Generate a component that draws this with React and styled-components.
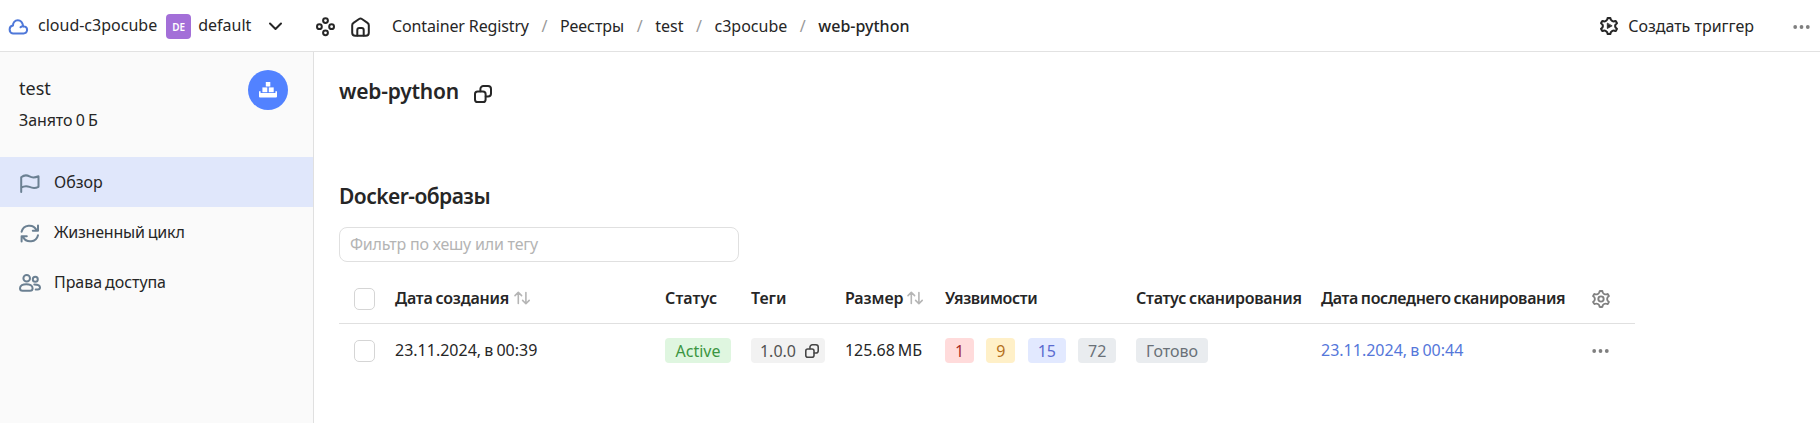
import React from "react";
import styled, { createGlobalStyle } from "styled-components";

const Global = createGlobalStyle`
  * { box-sizing: border-box; }
  body {
    margin: 0;
    background: #fff;
    color: #262626;
    font: 16px/20px "Noto Sans", sans-serif;
    white-space: nowrap;
    overflow: hidden;
  }
`;

const Page = styled.div`
  height: 423px;
  display: flex;
  flex-direction: column;
`;

const Text = styled.span`
  letter-spacing: ${(p) => p.$ls || 0}px;
  word-spacing: ${(p) => p.$ws || 0}px;
`;

const Glyph = styled.svg`
  display: block;
  flex: none;
  overflow: visible;
  fill: none;
  stroke: currentColor;
  stroke-width: 2;
  stroke-linecap: round;
  stroke-linejoin: round;
  color: ${(p) => p.$color || "inherit"};
`;

function Icon({ w, h, color, box, children, ...rest }) {
  return (
    <Glyph width={w} height={h} viewBox={box || `0 0 ${w} ${h}`} $color={color} {...rest}>
      {children}
    </Glyph>
  );
}

const CloudIcon = () => (
  <Icon w={20} h={16} color="#4f78d9">
    <path d="M5 14.4h10.600a3.500 3.500 0 0 0 1.400-6.700 3.400 3.400 0 0 0-1.700-.3C14.600 3.800 12.700 1.300 9.800 1.300c-3 0-4.900 2.300-4.800 5.200A4 4 0 0 0 5 14.400z" />
    <path d="M15.300 7.200a3.500 3.500 0 0 0-2.800 1" />
  </Icon>
);
const ChevronIcon = () => (
  <Icon w={13} h={9}><path d="M1 1.500l5.500 5.500L12 1.500" /></Icon>
);
const ServicesIcon = () => (
  <Icon w={19} h={19}>
    <circle cx="9.500" cy="3.600" r="2.400" />
    <circle cx="3.400" cy="9.700" r="2.400" />
    <circle cx="15.600" cy="9.700" r="2.400" />
    <circle cx="9.500" cy="15.800" r="2.400" />
  </Icon>
);
const HomeIcon = () => (
  <Icon w={19} h={20}>
    <path d="M1.200 8.300c0-1 .5-1.900 1.300-2.400L8.100 2a2.500 2.500 0 0 1 2.800 0l5.600 3.900c.8.500 1.300 1.400 1.300 2.400V15.700a3 3 0 0 1-3 3H4.200a3 3 0 0 1-3-3z" />
    <path d="M6.300 18.500V13a2 2 0 0 1 2-2h2.400a2 2 0 0 1 2 2v5.500" />
  </Icon>
);
const gearPath =
  "M7.199 2H8.8a.2.2 0 0 1 .2.2c0 1.808 1.958 2.939 3.524 2.034a.199.199 0 0 1 .271.073l.802 1.388a.199.199 0 0 1-.073.272c-1.566.904-1.566 3.164 0 4.069a.199.199 0 0 1 .073.271l-.802 1.388a.199.199 0 0 1-.271.073C10.958 10.863 9 11.993 9 13.8a.199.199 0 0 1-.199.2H7.2a.199.199 0 0 1-.2-.2c0-1.808-1.958-2.938-3.524-2.034a.199.199 0 0 1-.272-.073l-.8-1.388a.199.199 0 0 1 .072-.271c1.566-.905 1.566-3.165 0-4.07a.199.199 0 0 1-.073-.27l.801-1.389a.199.199 0 0 1 .272-.072C5.042 5.138 7 4.007 7 2.199c0-.11.089-.199.199-.199Z";
const gearBox = "1.6 1.25 12.8 13.5";
const TriggerIcon = () => (
  <Icon w={18} h={18} box={gearBox} preserveAspectRatio="none">
    <path d={gearPath} strokeWidth="1.500" />
    <path d="M6.800 6.100v3.800L10 8z" fill="currentColor" strokeWidth=".6" />
  </Icon>
);
const SettingsIcon = () => (
  <Icon w={18} h={18} box={gearBox} preserveAspectRatio="none" color="#808080">
    <path d={gearPath} strokeWidth="1.350" />
    <circle cx="8" cy="8" r="1.900" strokeWidth="1.350" />
  </Icon>
);
const DotsIcon = () => (
  <Icon w={17} h={4} color="#7f7f7f">
    <g fill="currentColor" stroke="none">
      <circle cx="2.200" cy="2" r="1.900" />
      <circle cx="8.500" cy="2" r="1.900" />
      <circle cx="14.800" cy="2" r="1.900" />
    </g>
  </Icon>
);
const CopyIcon = ({ size = 18, color }) => (
  <Icon w={size} h={size} box="0 0 18 18" color={color}>
    <rect x="1" y="6.400" width="10.600" height="10.600" rx="2.600" />
    <path d="M6.400 6.200V4a3 3 0 0 1 3-3H14a3 3 0 0 1 3 3v4.600a3 3 0 0 1-3 3h-2.200" />
  </Icon>
);
const RegistryIcon = () => (
  <Icon w={18} h={16}>
    <g fill="#fff" stroke="none">
      <rect x="6.800" y="0" width="4.500" height="4.500" />
      <rect x="3.400" y="5.400" width="4.900" height="4.800" />
      <rect x="9.800" y="5.400" width="4.900" height="4.800" />
      <path d="M0 9.200h1.600v1.800h14.800v-1.800h1.600v5.400q0 1-1 1H1q-1 0-1-1z" />
    </g>
  </Icon>
);
const FlagIcon = () => (
  <Icon w={20} h={19}>
    <path d="M1.200 18V3.200C4 1 7 1 9.500 2.400S15 3.700 18.500 2.300V12.800C15 14.600 12.500 14.200 9.500 12.900S4 11.900 1.200 13.700" />
  </Icon>
);
const CycleIcon = () => (
  <Icon w={20} h={19}>
    <path d="M1.600 7.800A8 8 0 0 1 16.500 6M18 1.500v5.200h-5.200" />
    <path d="M18 11.200A8 8 0 0 1 3.100 13M1.600 17.500v-5.200h5.200" />
  </Icon>
);
const PeopleIcon = () => (
  <Icon w={22} h={18}>
    <circle cx="7.700" cy="4.300" r="3.300" />
    <path d="M1 14.200C1 11.600 4 10.200 7.300 10.200s6.300 1.400 6.300 4c0 1.600-1 2.600-2.600 2.600H3.600C2 16.800 1 15.800 1 14.200z" />
    <circle cx="16.300" cy="5.200" r="2.500" />
    <path d="M15.300 10.500c3 0 5.700 1 5.700 3 0 1.200-.9 1.900-2.300 1.900h-2" />
  </Icon>
);
const SortIcon = () => (
  <Icon w={16} h={14} color="#b5b5b5">
    <path strokeWidth="1.600" d="M4.300 12.500V1.500M1 4.600l3.300-3.300 3.300 3.300M11.900 1.500v11M8.600 9.400l3.300 3.300 3.300-3.300" />
  </Icon>
);

const Header = styled.header`
  height: 52px;
  flex: none;
  display: flex;
  align-items: center;
  border-bottom: 1px solid #e2e2e2;
  padding: 2px 10px 0 8px;
`;
const Picker = styled.div`
  width: 308px;
  display: flex;
  align-items: center;
`;
const CloudName = styled(Text)`
  margin: -3px 9px 0 10px;
`;
const FolderName = styled(Text)`
  margin: -3px 18px 0 7px;
`;
const FolderBadge = styled.span`
  width: 25px;
  height: 25px;
  border-radius: 4px;
  background: #a36fd8;
  color: #fff;
  font-size: 10px;
  font-weight: 600;
  line-height: 26px;
  text-align: center;
`;
const NavIcons = styled.div`
  display: flex;
  align-items: center;
  gap: 16px;
`;
const Crumbs = styled.nav`
  margin: -1px auto 0 22px;
  display: flex;
`;
const Crumb = styled(Text)`
  font-weight: ${(p) => (p.$current ? 500 : 400)};
`;
const Slash = styled.span`
  width: 31px;
  text-align: center;
  color: #999;
`;
const TriggerButton = styled.div`
  display: flex;
  align-items: center;
  gap: 10px;
  margin: -1px 39px 0 0;
`;

const Body = styled.div`
  flex: 1;
  display: flex;
`;
const Sidebar = styled.aside`
  width: 314px;
  flex: none;
  background: #fafafa;
  border-right: 1px solid #e0e0e0;
`;
const RegistryHead = styled.div`
  height: 105px;
  display: flex;
  justify-content: space-between;
  padding: 18px 25px 0 19px;
`;
const RegistryInfo = styled.div`
  padding-top: 8px;
`;
const RegistryName = styled.div`
  font-size: 18px;
`;
const RegistryUsage = styled(Text)`
  display: block;
  margin-top: 12px;
`;
const RegistryBadge = styled.div`
  width: 40px;
  height: 40px;
  border-radius: 50%;
  background: #5282ff;
  display: flex;
  align-items: center;
  justify-content: center;
`;
const MenuItem = styled.div`
  height: 50px;
  display: flex;
  align-items: center;
  background: ${(p) => (p.$active ? "#e0e7fb" : "transparent")};
`;
const MenuIcon = styled.span`
  width: 54px;
  padding: 2px 0 0 ${(p) => p.$pad || 20}px;
  color: #6b8092;
`;

const Main = styled.main`
  width: 1321px;
  padding: 27px 0 0 25px;
`;
const TitleRow = styled.div`
  display: flex;
  align-items: center;
  gap: 15px;
  height: 24px;
`;
const Title = styled.h1`
  margin: 0;
  font-size: 21px;
  line-height: 24px;
  font-weight: 600;
  letter-spacing: -0.22px;
`;
const CopyTitle = styled.span`
  padding-top: 5px;
`;
const Subtitle = styled.h2`
  margin: 81px 0 19px;
  font-size: 21px;
  line-height: 24px;
  font-weight: 600;
  letter-spacing: -0.55px;
`;
const Filter = styled.input`
  display: block;
  width: 400px;
  height: 35px;
  border: 1px solid #e0e0e0;
  border-radius: 8px;
  padding: 0 10px 1px;
  font: inherit;
  letter-spacing: -0.21px;
  &::placeholder { color: #b4b4b4; opacity: 1; }
`;
const TableRow = styled.div`
  display: grid;
  grid-template-columns: 56px 270px 86px 94px 100px 191px 185px 271px 42px;
  height: ${(p) => (p.$head ? 50 : 53)}px;
  margin-top: ${(p) => (p.$head ? 12 : 0)}px;
  align-items: center;
  font-weight: ${(p) => (p.$head ? 600 : 400)};
  border-bottom: ${(p) => (p.$head ? "1px solid #e0e0e0" : "0")};
`;
const Cell = styled.div`
  display: flex;
  align-items: center;
  gap: ${(p) => p.$gap || 0}px;
  padding-left: ${(p) => p.$pad || 0}px;
  margin-top: ${(p) => p.$shift || 0}px;
`;
const Checkbox = styled.span`
  width: 21px;
  height: 22px;
  border: 1px solid #d5d5d5;
  border-radius: 5px;
  background: #fff;
`;
const tones = {
  green: ["#dff6e0", "#3b9542"],
  plain: ["#f2f2f2", "#525252"],
  red: ["#ffdbdb", "#a62c2c"],
  yellow: ["#fff0c8", "#b5701c"],
  blue: ["#e2e9ff", "#5b6bcf"],
  gray: ["#e9ecef", "#6a7178"],
};
const Label = styled.span`
  display: inline-flex;
  align-items: center;
  justify-content: center;
  width: ${(p) => p.$w}px;
  height: 25px;
  gap: 9px;
  padding-left: ${(p) => p.$pad || 0}px;
  border-radius: 4px;
  background: ${(p) => tones[p.$tone][0]};
  color: ${(p) => tones[p.$tone][1]};
`;
const Link = styled(Text)`
  color: #5577da;
`;
const Severities = styled(Cell)`
  gap: 12.4px;
`;

export default function App() {
  return (
    <Page>
      <Global />
      <Header>
        <Picker>
          <CloudIcon />
          <CloudName>cloud-c3pocube</CloudName>
          <FolderBadge>DE</FolderBadge>
          <FolderName>default</FolderName>
          <ChevronIcon />
        </Picker>
        <NavIcons>
          <ServicesIcon />
          <HomeIcon />
        </NavIcons>
        <Crumbs>
          <Crumb $ls={-0.14}>Container Registry</Crumb>
          <Slash>/</Slash>
          <Crumb>Реестры</Crumb>
          <Slash>/</Slash>
          <Crumb>test</Crumb>
          <Slash>/</Slash>
          <Crumb>c3pocube</Crumb>
          <Slash>/</Slash>
          <Crumb $current>web-python</Crumb>
        </Crumbs>
        <TriggerButton>
          <TriggerIcon />
          <Text>Создать триггер</Text>
        </TriggerButton>
        <DotsIcon />
      </Header>
      <Body>
        <Sidebar>
          <RegistryHead>
            <RegistryInfo>
              <RegistryName>test</RegistryName>
              <RegistryUsage $ls={-0.1} $ws={-0.8}>Занято 0 Б</RegistryUsage>
            </RegistryInfo>
            <RegistryBadge><RegistryIcon /></RegistryBadge>
          </RegistryHead>
          <MenuItem $active>
            <MenuIcon><FlagIcon /></MenuIcon>
            <Text>Обзор</Text>
          </MenuItem>
          <MenuItem>
            <MenuIcon><CycleIcon /></MenuIcon>
            <Text $ls={-0.2} $ws={-1}>Жизненный цикл</Text>
          </MenuItem>
          <MenuItem>
            <MenuIcon $pad={19}><PeopleIcon /></MenuIcon>
            <Text $ls={-0.06} $ws={-1}>Права доступа</Text>
          </MenuItem>
        </Sidebar>
        <Main>
          <TitleRow>
            <Title>web-python</Title>
            <CopyTitle><CopyIcon /></CopyTitle>
          </TitleRow>
          <Subtitle>Docker-образы</Subtitle>
          <Filter placeholder="Фильтр по хешу или тегу" />
          <TableRow $head>
            <Cell $pad={15}><Checkbox /></Cell>
            <Cell $gap={5} $shift={-1}><Text $ls={-0.22} $ws={-1}>Дата создания</Text><SortIcon /></Cell>
            <Cell $shift={-1}><Text $ls={0.1}>Статус</Text></Cell>
            <Cell $shift={-1}><Text>Теги</Text></Cell>
            <Cell $gap={4} $shift={-1}><Text $ls={-0.1}>Размер</Text><SortIcon /></Cell>
            <Cell $shift={-1}><Text $ls={-0.36}>Уязвимости</Text></Cell>
            <Cell $shift={-1}><Text $ls={-0.25} $ws={-1}>Статус сканирования</Text></Cell>
            <Cell $shift={-1}><Text $ls={-0.34} $ws={-1}>Дата последнего сканирования</Text></Cell>
            <Cell><SettingsIcon /></Cell>
          </TableRow>
          <TableRow>
            <Cell $pad={15}><Checkbox /></Cell>
            <Cell $shift={-2}><Text $ws={-1}>23.11.2024, в 00:39</Text></Cell>
            <Cell><Label $tone="green" $w={66}>Active</Label></Cell>
            <Cell>
              <Label $tone="plain" $w={74} $pad={3}>
                1.0.0
                <CopyIcon size={14} color="#444" />
              </Label>
            </Cell>
            <Cell $shift={-2}><Text $ls={-0.05} $ws={-1}>125.68 МБ</Text></Cell>
            <Severities>
              <Label $tone="red" $w={29}>1</Label>
              <Label $tone="yellow" $w={29}>9</Label>
              <Label $tone="blue" $w={38}>15</Label>
              <Label $tone="gray" $w={38}>72</Label>
            </Severities>
            <Cell><Label $tone="gray" $w={72}>Готово</Label></Cell>
            <Cell $shift={-2}><Link $ws={-1}>23.11.2024, в 00:44</Link></Cell>
            <Cell><DotsIcon /></Cell>
          </TableRow>
        </Main>
      </Body>
    </Page>
  );
}
